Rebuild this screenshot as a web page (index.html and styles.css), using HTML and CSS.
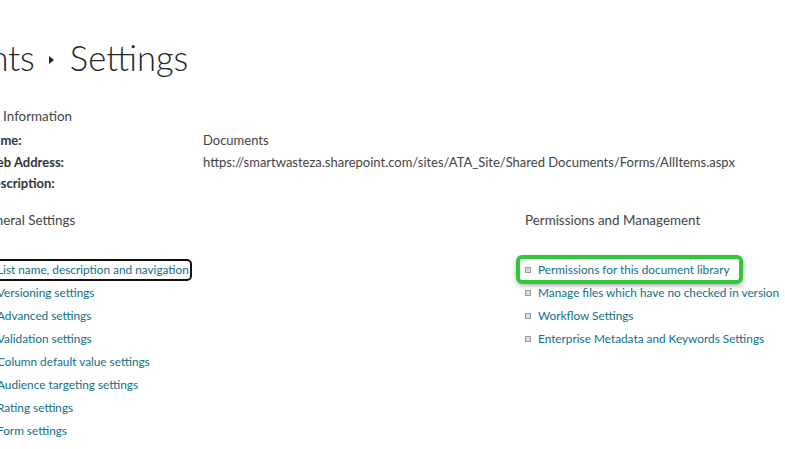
FILE: index.html
```html
<!DOCTYPE html>
<html>
<head>
<meta charset="utf-8">
<link rel="stylesheet" href="styles.css">
</head>
<body>
<div class="page">
  <h1 class="title"><span class="crumb">Documents</span><span class="sep"></span><span>Settings</span></h1>

  <section class="info">
    <h2 class="section-head shifted">List Information</h2>
    <div class="info-grid">
      <div class="label">Name:</div><div class="value">Documents</div>
      <div class="label">Web Address:</div><div class="value">https://smartwasteza.sharepoint.com/sites/ATA_Site/Shared Documents/Forms/AllItems.aspx</div>
      <div class="label">Description:</div><div class="value"></div>
    </div>
  </section>

  <section class="columns">
    <div class="col col-left">
      <h2 class="section-head shifted">General Settings</h2>
      <ul class="links">
        <li><a class="focused">List name, description and navigation</a></li>
        <li><a>Versioning settings</a></li>
        <li><a>Advanced settings</a></li>
        <li><a>Validation settings</a></li>
        <li><a>Column default value settings</a></li>
        <li><a>Audience targeting settings</a></li>
        <li><a>Rating settings</a></li>
        <li><a>Form settings</a></li>
      </ul>
    </div>
    <div class="col col-right">
      <h2 class="section-head">Permissions and Management</h2>
      <ul class="links">
        <li class="highlight"><a>Permissions for this document library</a></li>
        <li><a>Manage files which have no checked in version</a></li>
        <li><a>Workflow Settings</a></li>
        <li><a>Enterprise Metadata and Keywords Settings</a></li>
      </ul>
    </div>
  </section>
</div>
</body>
</html>
```

FILE: styles.css
```css
html, body {
  margin: 0;
  padding: 0;
  background: #ffffff;
  overflow: hidden;
}
body {
  font-family: Lato, "Open Sans", sans-serif;
  color: #333333;
  font-size: 13px;
}
.page {
  margin-left: -16px;
  padding-top: 34px;
}
.title {
  margin: 0 0 0 -121px;
  font-weight: 300;
  font-size: 34.6px;
  line-height: 48px;
  color: #262626;
  display: flex;
  align-items: center;
  white-space: nowrap;
}
.sep {
  width: 0;
  height: 0;
  border-top: 4px solid transparent;
  border-bottom: 4px solid transparent;
  border-left: 5px solid #222;
  margin: 4px 16px 0 14px;
}
.section-head {
  margin: 0;
  font-size: 13.4px;
  font-weight: 400;
  color: #444444;
  line-height: 20px;
  white-space: nowrap;
}
.shifted {
  margin-left: -5px;
}
.info {
  margin-top: 24px;
}
.info-grid {
  display: grid;
  grid-template-columns: 219px auto;
  grid-auto-rows: 21.5px;
  margin-top: 4px;
  line-height: 21px;
  white-space: nowrap;
}
.label {
  font-weight: 700;
  color: #333;
}
.value {
  color: #444;
}
.columns {
  display: grid;
  grid-template-columns: 541px auto;
  margin-top: 15px;
}
.links {
  list-style: none;
  margin: 29px 0 0 0;
  padding: 0;
  font-size: 11.8px;
}
.links li {
  display: flex;
  align-items: center;
  height: 23px;
  gap: 7px;
  white-space: nowrap;
}
.links li::before {
  content: "";
  width: 4px;
  height: 4px;
  border: 1px solid #9a9a9a;
  background: #dcdcdc;
  flex: none;
}
.links a {
  color: #0f6f88;
  text-decoration: none;
  line-height: 18px;
}
.focused {
  outline: 2px solid #111;
  border-radius: 3px;
  padding-right: 1px;
}
.highlight {
  position: relative;
}
.highlight::after {
  content: "";
  position: absolute;
  left: -9px;
  top: -4px;
  width: 219px;
  height: 21px;
  border: 4px solid #2fc83a;
  border-radius: 6px;
  box-shadow: 0 2px 4px rgba(0,0,0,0.3);
}
```
